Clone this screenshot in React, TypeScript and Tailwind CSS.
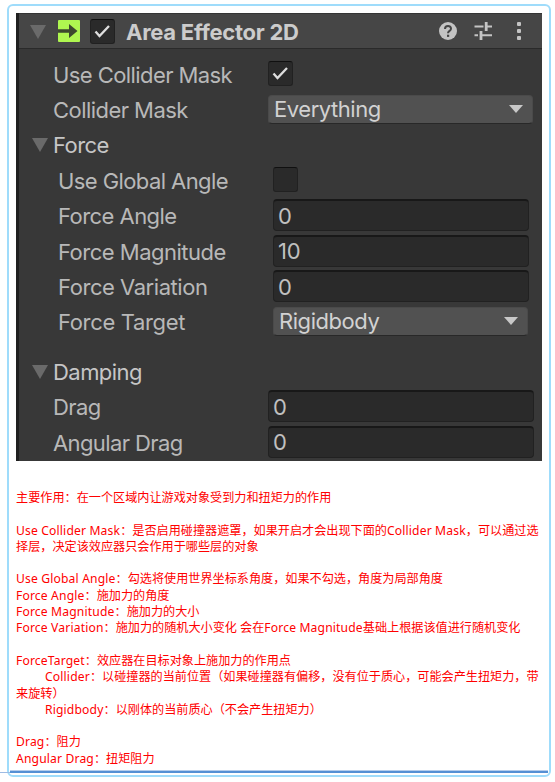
import type { ReactNode } from "react";

const Fold = () => (
  <svg width="16" height="14" viewBox="0 0 16 14" className="mt-[2px] block shrink-0">
    <path d="M0 0H16L8 14Z" fill="#6a6a6a" />
  </svg>
);

const Check = ({ on = true }: { on?: boolean }) => (
  <span className="box-border flex h-[25px] w-[25px] shrink-0 items-center justify-center rounded-[3px] border border-[#212121] border-t-[#101010] bg-[#2a2a2a]">
    {on && (
      <svg width="17" height="15" viewBox="0 0 17 15" className="block">
        <path d="M1.5 7.5L5.5 12L15 2" fill="none" stroke="#dedede" strokeWidth="2.3" />
      </svg>
    )}
  </span>
);

const Field = ({ value }: { value: string }) => (
  <span className="box-border flex h-[32px] w-full items-center rounded-[4px] border border-[#212121] border-t-2 border-t-[#181818] bg-[#2a2a2a] pl-[4px] text-[#c0c0c0]">
    {value}
  </span>
);

const Dropdown = ({ value }: { value: string }) => (
  <span className="box-border flex h-[29px] w-full items-center justify-between rounded-[4px] border border-[#4a4a4a] border-b-[#282828] bg-[#515151] pb-px pl-[5px] pr-[9px] tracking-[-0.45px] text-[#d2d2d2]">
    {value}
    <svg width="14" height="8" viewBox="0 0 14 8" className="block">
      <path d="M0 0H14L7 8Z" fill="#c8c8c8" />
    </svg>
  </span>
);

type RowProps = { label: string; track: string; nested?: boolean; wide: string; children: ReactNode };

const Row = ({ label, track, nested, wide, children }: RowProps) => (
  <div className={`flex h-[35.4px] items-center ${nested ? "pl-[39px]" : "pl-[34px]"}`}>
    <span className={`w-[215px] shrink-0 pt-[2px] ${track}`}>{label}</span>
    <span className={`flex ${wide}`}>{children}</span>
  </div>
);

const Heading = ({ children }: { children: string }) => (
  <div className="flex h-[35.4px] items-center gap-[5px] pl-[13px]">
    <Fold />
    <span className="pt-[2px] tracking-[-0.55px] text-[#c6c6c6]">{children}</span>
  </div>
);

const Help = () => (
  <svg width="18" height="18" viewBox="0 0 18 18" className="block">
    <circle cx="9" cy="9" r="9" fill="#c4c4c4" />
    <path d="M6 7C6 2.9 12 3 12 6.7C12 9 9 8.7 9 11.2" fill="none" stroke="#454545" strokeWidth="2" />
    <rect x="8" y="12.7" width="2.2" height="2.2" fill="#454545" />
  </svg>
);

const Preset = () => (
  <svg width="19" height="18" viewBox="0 0 19 18" className="block">
    <path d="M0.5 4.5H9.5M12 4.5H18M0.5 13.2H4M7 13.2H18" fill="none" stroke="#c4c4c4" strokeWidth="1.9" />
    <path d="M12.2 0V9M7 9V18" fill="none" stroke="#c4c4c4" strokeWidth="2.8" />
  </svg>
);

const Inspector = () => (
  <section className="h-[448px] w-[526px] border-l-[3px] border-[#202020] bg-[#383838] font-['Inter',sans-serif] text-[22px] leading-[26px] tracking-[-0.3px] text-[#b8b8b8]">
    <header className="flex h-[36px] items-center border-b border-b-[#2a2a2a] border-t border-t-[#353535] bg-[#464646] pl-[11px]">
      <Fold />
      <svg width="22" height="22" viewBox="0 0 22 22" className="ml-[12px] block">
        <rect width="22" height="22" rx="1" fill="#aff650" />
        <path d="M0 9.2H11V4L19.5 11L11 18V12.8H0Z" fill="#3d482e" />
      </svg>
      <span className="ml-[10px] flex"><Check /></span>
      <span className="ml-[11px] w-[313px] pt-[2px] font-bold tracking-[-0.27px] text-[#cccccc]">Area Effector 2D</span>
      <Help />
      <span className="ml-[17px]"><Preset /></span>
      <svg width="4" height="18" viewBox="0 0 4 18" className="ml-[24px] block" fill="#c4c4c4">
        <rect width="4" height="4" rx="1" />
        <rect y="7" width="4" height="4" rx="1" />
        <rect y="14" width="4" height="4" rx="1" />
      </svg>
    </header>
    <div className="pt-[7px]">
      <Row label="Use Collider Mask" track="tracking-[-0.58px]" wide="w-[265px]"><Check /></Row>
      <Row label="Collider Mask" track="tracking-[-0.55px]" wide="w-[265px]"><Dropdown value="Everything" /></Row>
      <Heading>Force</Heading>
      <Row nested label="Use Global Angle" track="tracking-[-0.58px]" wide="w-[256px]"><Check on={false} /></Row>
      <Row nested label="Force Angle" track="tracking-[-0.55px]" wide="w-[256px]"><Field value="0" /></Row>
      <Row nested label="Force Magnitude" track="tracking-[-0.5px]" wide="w-[256px]"><Field value="10" /></Row>
      <Row nested label="Force Variation" track="tracking-[-0.45px]" wide="w-[256px]"><Field value="0" /></Row>
      <Row nested label="Force Target" track="tracking-[-0.35px]" wide="w-[255px]"><Dropdown value="Rigidbody" /></Row>
      <div className="h-[14px]" />
      <Heading>Damping</Heading>
      <Row label="Drag" track="tracking-[-0.55px]" wide="w-[266px]"><Field value="0" /></Row>
      <Row label="Angular Drag" track="tracking-[-0.6px]" wide="w-[266px]"><Field value="0" /></Row>
    </div>
  </section>
);

const notes: string[] = [
  "主要作用：在一个区域内让游戏对象受到力和扭矩力的作用",
  "",
  "Use Collider Mask：是否启用碰撞器遮罩，如果开启才会出现下面的Collider Mask，可以通过选",
  "择层，决定该效应器只会作用于哪些层的对象",
  "",
  "Use Global Angle：勾选将使用世界坐标系角度，如果不勾选，角度为局部角度",
  "Force Angle：施加力的角度",
  "Force Magnitude：施加力的大小",
  "Force Variation：施加力的随机大小变化 会在Force Magnitude基础上根据该值进行随机变化",
  "",
  "ForceTarget：效应器在目标对象上施加力的作用点",
  "\tCollider：以碰撞器的当前位置（如果碰撞器有偏移，没有位于质心，可能会产生扭矩力，带",
  "来旋转）",
  "\tRigidbody：以刚体的当前质心（不会产生扭矩力）",
  "",
  "Drag：阻力",
  "Angular Drag：扭矩阻力",
];

// Latin runs are tracked slightly wider than the Chinese text around them.
const Note = ({ text }: { text: string }) => (
  <p className={`h-[16.3px] whitespace-pre ${text.startsWith("\t") ? "pl-[29px]" : ""}`}>
    {text
      .trim()
      .split(/([A-Za-z][A-Za-z ]*)/)
      .map((run, i) =>
        i % 2 ? (
          <span key={i} className="tracking-[0.15px]">{run}</span>
        ) : (
          run
        ),
      )}
  </p>
);

export default function App() {
  return (
    <main className="relative h-[782px] w-[555px] overflow-hidden bg-white pl-[7px] pt-[4px]">
      <div className="absolute left-0 top-[772px] h-px w-[10px] bg-[#9dbbe3]" />
      <div className="flex h-[773px] w-[544px] flex-col rounded-[6px] border-2 border-[#9fdcfb] pl-[7px] pt-[7px]">
        <Inspector />
        <div className="mt-[29px] h-[280px] font-['Noto_Sans','Noto_Sans_CJK_SC',sans-serif] text-[12.13px] leading-[16.3px] text-[#ff0000]">
          {notes.map((text, i) => (
            <Note key={i} text={text} />
          ))}
        </div>
        <div className="-ml-[6px] h-[3px] w-[538px] border-t border-[#b5cdec] bg-[#5590d4]" />
      </div>
    </main>
  );
}
